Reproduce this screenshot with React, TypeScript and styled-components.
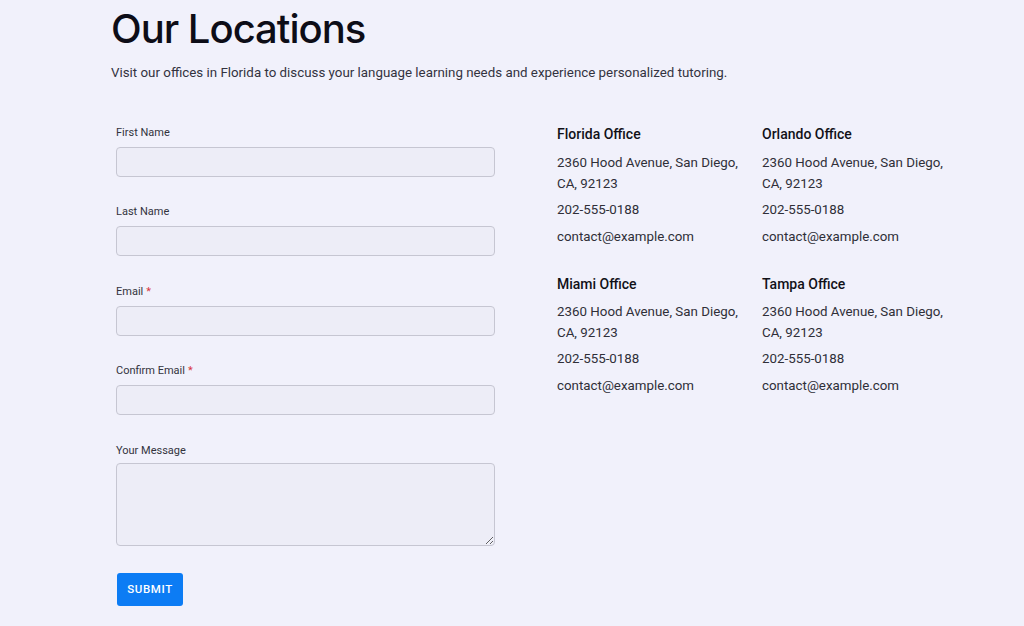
import React from "react";
import styled, { createGlobalStyle } from "styled-components";

const GlobalStyle = createGlobalStyle`
  html, body {
    margin: 0;
    padding: 0;
    background: #f1f1fb;
  }
  body {
    font-family: Roboto, "Liberation Sans", Arial, sans-serif;
    color: #2f2f3a;
  }
  * { box-sizing: border-box; }
`;

const Page = styled.main`
  min-height: 626px;
  padding: 4px 0 20px 111px;
`;

const Title = styled.h1`
  margin: 0;
  font-family: Inter, "Noto Sans", sans-serif;
  font-size: 40px;
  font-weight: 500;
  line-height: 50px;
  letter-spacing: -1px;
  color: #0d0d17;
`;

const Intro = styled.p`
  margin: 9px 0 0;
  font-size: 13.33px;
  line-height: 20px;
  color: #33333f;
`;

const Content = styled.div`
  display: grid;
  grid-template-columns: 446px auto;
  margin-top: 41.5px;
`;

const Form = styled.form`
  display: flex;
  flex-direction: column;
  gap: 27.5px;
  padding-left: 5px;
`;

const Field = styled.div`
  display: flex;
  flex-direction: column;
  width: 379px;
`;

const Label = styled.label<{ $spacing?: number }>`
  font-size: 11px;
  line-height: 16px;
  color: #33333d;
  margin-bottom: ${(p) => p.$spacing ?? 6}px;
`;

const Required = styled.span`
  color: #d9363e;
  margin-left: 3px;
`;

const inputBase = `
  width: 100%;
  background: #ededf7;
  border: 1px solid #c6c6d2;
  border-radius: 4px;
  font-family: Roboto, "Liberation Sans", Arial, sans-serif;
  font-size: 14px;
  outline: none;
`;

const Input = styled.input`
  ${inputBase}
  height: 30px;
`;

const TextArea = styled.textarea`
  ${inputBase}
  height: 83px;
  display: block;
  resize: vertical;
`;

const SubmitButton = styled.button`
  align-self: flex-start;
  width: 66px;
  height: 33px;
  margin-left: 1px;
  margin-top: -0.5px;
  border: none;
  border-radius: 3px;
  background: #0c7cf4;
  color: #ffffff;
  font-family: Roboto, "Liberation Sans", Arial, sans-serif;
  font-size: 11.5px;
  font-weight: 500;
  letter-spacing: 0.6px;
  text-transform: uppercase;
`;

const Offices = styled.div`
  display: grid;
  grid-template-columns: 192px 192px;
  column-gap: 13px;
  row-gap: 27px;
  align-content: start;
  margin-top: -0.5px;
`;

const Office = styled.section`
  display: flex;
  flex-direction: column;
`;

const OfficeName = styled.h3`
  margin: 0 0 7.5px;
  font-size: 14px;
  font-weight: 500;
  line-height: 20px;
  color: #111118;
`;

const OfficeLine = styled.p<{ $gap?: number }>`
  margin: ${(p) => p.$gap ?? 0}px 0 0;
  font-size: 13.33px;
  line-height: 21px;
  color: #2f2f38;
`;

const offices = ["Florida Office", "Orlando Office", "Miami Office", "Tampa Office"];

export default function App() {
  return (
    <>
      <GlobalStyle />
      <Page>
        <Title>Our Locations</Title>
        <Intro>
          Visit our offices in Florida to discuss your language learning needs and experience
          personalized tutoring.
        </Intro>
        <Content>
          <Form onSubmit={(e) => e.preventDefault()}>
            <Field>
              <Label htmlFor="first">First Name</Label>
              <Input id="first" type="text" />
            </Field>
            <Field>
              <Label htmlFor="last">Last Name</Label>
              <Input id="last" type="text" />
            </Field>
            <Field>
              <Label htmlFor="email">
                Email<Required>*</Required>
              </Label>
              <Input id="email" type="email" />
            </Field>
            <Field>
              <Label htmlFor="confirm">
                Confirm Email<Required>*</Required>
              </Label>
              <Input id="confirm" type="email" />
            </Field>
            <Field>
              <Label htmlFor="message" $spacing={4}>Your Message</Label>
              <TextArea id="message" />
            </Field>
            <SubmitButton type="submit">Submit</SubmitButton>
          </Form>
          <Offices>
            {offices.map((name) => (
              <Office key={name}>
                <OfficeName>{name}</OfficeName>
                <OfficeLine>2360 Hood Avenue, San Diego, CA, 92123</OfficeLine>
                <OfficeLine $gap={5}>202-555-0188</OfficeLine>
                <OfficeLine $gap={6}>contact@example.com</OfficeLine>
              </Office>
            ))}
          </Offices>
        </Content>
      </Page>
    </>
  );
}
